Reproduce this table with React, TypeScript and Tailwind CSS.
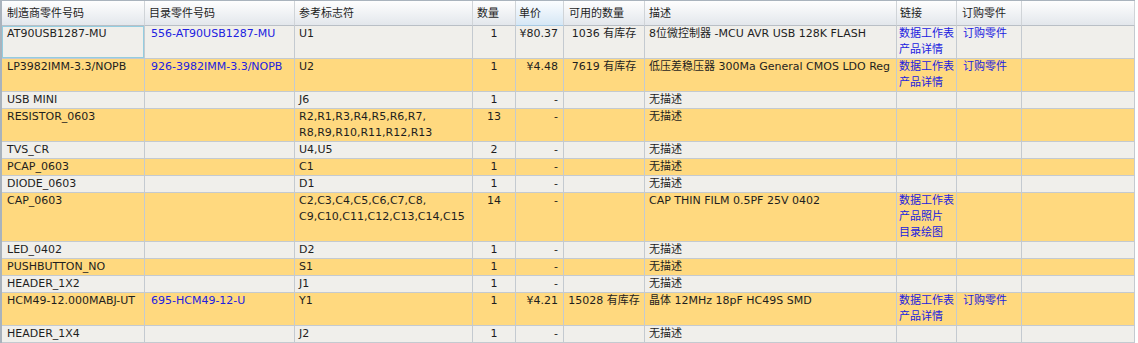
import React from "react";

type Part = {
  mfr: string;
  cat?: string;
  ref: string[];
  qty: string;
  price: string;
  stock?: string;
  desc: string;
  links?: string[];
  order?: boolean;
  selected?: boolean;
};

const parts: Part[] = [
  {
    mfr: "AT90USB1287-MU",
    cat: "556-AT90USB1287-MU",
    ref: ["U1"],
    qty: "1",
    price: "¥80.37",
    stock: "1036 有库存",
    desc: "8位微控制器 -MCU AVR USB 128K FLASH",
    links: ["数据工作表", "产品详情"],
    order: true,
    selected: true,
  },
  {
    mfr: "LP3982IMM-3.3/NOPB",
    cat: "926-3982IMM-3.3/NOPB",
    ref: ["U2"],
    qty: "1",
    price: "¥4.48",
    stock: "7619 有库存",
    desc: "低压差稳压器 300Ma General CMOS LDO Reg",
    links: ["数据工作表", "产品详情"],
    order: true,
  },
  { mfr: "USB MINI", ref: ["J6"], qty: "1", price: "-", desc: "无描述" },
  {
    mfr: "RESISTOR_0603",
    ref: ["R2,R1,R3,R4,R5,R6,R7,", "R8,R9,R10,R11,R12,R13"],
    qty: "13",
    price: "-",
    desc: "无描述",
  },
  { mfr: "TVS_CR", ref: ["U4,U5"], qty: "2", price: "-", desc: "无描述" },
  { mfr: "PCAP_0603", ref: ["C1"], qty: "1", price: "-", desc: "无描述" },
  { mfr: "DIODE_0603", ref: ["D1"], qty: "1", price: "-", desc: "无描述" },
  {
    mfr: "CAP_0603",
    ref: ["C2,C3,C4,C5,C6,C7,C8,", "C9,C10,C11,C12,C13,C14,C15"],
    qty: "14",
    price: "-",
    desc: "CAP THIN FILM 0.5PF 25V 0402",
    links: ["数据工作表", "产品照片", "目录绘图"],
  },
  { mfr: "LED_0402", ref: ["D2"], qty: "1", price: "-", desc: "无描述" },
  { mfr: "PUSHBUTTON_NO", ref: ["S1"], qty: "1", price: "-", desc: "无描述" },
  { mfr: "HEADER_1X2", ref: ["J1"], qty: "1", price: "-", desc: "无描述" },
  {
    mfr: "HCM49-12.000MABJ-UT",
    cat: "695-HCM49-12-U",
    ref: ["Y1"],
    qty: "1",
    price: "¥4.21",
    stock: "15028 有库存",
    desc: "晶体 12MHz 18pF HC49S SMD",
    links: ["数据工作表", "产品详情"],
    order: true,
  },
  { mfr: "HEADER_1X4", ref: ["J2"], qty: "1", price: "-", desc: "无描述" },
];

const cell = "border-r border-b border-[#c4cad0] whitespace-nowrap overflow-hidden";
const head =
  "h-[25px] flex items-center pt-[2px] border-r border-b border-r-[#d0d4d8] border-b-[#b9bfc6] bg-gradient-to-b from-[#fefefe] to-[#e3e7ec] whitespace-nowrap";

const PartRow = ({ p, odd }: { p: Part; odd: boolean }) => {
  const bg = odd ? "bg-[#f0efeb]" : "bg-[#ffd97f]";
  return (
    <>
      <div className={`${cell} ${bg} pl-[5px] ${p.selected ? "shadow-[inset_0_0_0_1px_#94cde0]" : ""}`}>
        {p.mfr}
      </div>
      <div className={`${cell} ${bg} pl-[6px] text-[#2121e0]`}>{p.cat}</div>
      <div className={`${cell} ${bg} pl-[4px]`}>
        {p.ref.map((r) => (
          <div key={r}>{r}</div>
        ))}
      </div>
      <div className={`${cell} ${bg} text-center`}>{p.qty}</div>
      <div className={`${cell} ${bg} text-right pr-[5px]`}>{p.price}</div>
      <div className={`${cell} ${bg} text-center`}>{p.stock}</div>
      <div className={`${cell} ${bg} pl-[4px]`}>{p.desc}</div>
      <div className={`${cell} ${bg} pl-[2px] text-[#2121e0]`}>
        {p.links?.map((l) => (
          <div key={l}>{l}</div>
        ))}
      </div>
      <div className={`${cell} ${bg} pl-[6px] text-[#2121e0]`}>{p.order ? "订购零件" : ""}</div>
      <div className={`${cell} ${bg}`} />
    </>
  );
};

export default function App() {
  return (
    <div className="w-[1138px] h-[343px] bg-white overflow-hidden">
      <div
        className="w-[1135px] border-l-2 border-t border-[#a9b3bd] text-[11px] leading-[16px] text-[#1e1e1e]"
        style={{ fontFamily: '"DejaVu Sans", "Noto Sans CJK SC", sans-serif' }}
      >
        <div className="grid grid-cols-[143px_150px_178px_43px_48px_81px_252px_60px_65px_113px]">
          <div className={`${head} pl-[5px]`}>制造商零件号码</div>
          <div className={`${head} pl-[4px]`}>目录零件号码</div>
          <div className={`${head} pl-[4px]`}>参考标志符</div>
          <div className={`${head} pl-[4px]`}>数量</div>
          <div className="h-[25px] flex items-center pt-[2px] pl-[3px] border-r border-b border-r-[#d0d4d8] border-b-[#a9cbe4] bg-gradient-to-b from-[#fbfdff] to-[#d6e7f5] whitespace-nowrap">
            单价
          </div>
          <div className={`${head} pl-[5px]`}>可用的数量</div>
          <div className={`${head} pl-[4px]`}>描述</div>
          <div className={`${head} pl-[3px]`}>链接</div>
          <div className={`${head} pl-[5px]`}>订购零件</div>
          <div className={`${head} border-r-[#a9b3bd]`} />
          {parts.map((p, i) => (
            <PartRow key={p.mfr} p={p} odd={i % 2 === 0} />
          ))}
        </div>
      </div>
    </div>
  );
}
